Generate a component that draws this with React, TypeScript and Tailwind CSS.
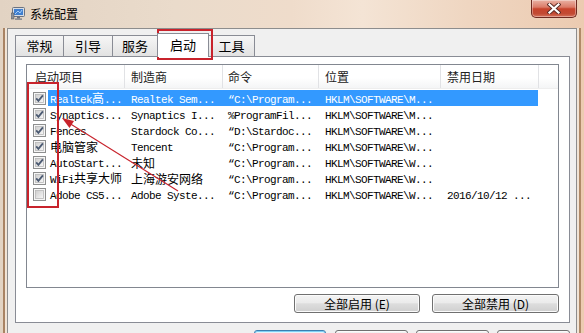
import React from 'react';

const CJK_SPLIT = /([\u3400-\u9fff\uff00-\uffef]+)/;
const CJK_TEST = /[\u3400-\u9fff\uff00-\uffef]/;

function Mixed({ text }: { text: string }) {
  const parts = text.split(CJK_SPLIT).filter((p) => p !== '');
  return (
    <>
      {parts.map((p, i) =>
        CJK_TEST.test(p) ? (
          <span key={i} className="font-['Noto_Sans_CJK_SC',sans-serif] text-[12px] tracking-normal">
            {p}
          </span>
        ) : (
          <span key={i} className="font-['Liberation_Mono',monospace] text-[11px] tracking-[-0.6px]">
            {p}
          </span>
        )
      )}
    </>
  );
}

function CheckBox({ on }: { on: boolean }) {
  return (
    <svg width="13" height="13" viewBox="0 0 13 13" className="block">
      <defs>
        <linearGradient id="cbg" x1="0" y1="0" x2="1" y2="1">
          <stop offset="0" stopColor="#cdcdcd" />
          <stop offset="1" stopColor="#f8f8f8" />
        </linearGradient>
      </defs>
      <rect x="0.5" y="0.5" width="12" height="12" fill="#f6f6f6" stroke="#8e8f8f" />
      <rect x="2.5" y="2.5" width="8" height="8" fill="url(#cbg)" stroke="#b9b9b9" strokeWidth="0.8" />
      {on && <path d="M3.2 6.4 L5.4 8.9 L9.9 3.4" fill="none" stroke="#4b5a72" strokeWidth="1.8" />}
    </svg>
  );
}

const rows = [
  { on: true, a: 'Realtek高...', b: 'Realtek Sem...', c: '“C:\\Program...', d: 'HKLM\\SOFTWARE\\M...', e: '' },
  { on: true, a: 'Synaptics...', b: 'Synaptics I...', c: '%ProgramFil...', d: 'HKLM\\SOFTWARE\\M...', e: '' },
  { on: true, a: 'Fences', b: 'Stardock Co...', c: '“D:\\Stardoc...', d: 'HKLM\\SOFTWARE\\M...', e: '' },
  { on: true, a: '电脑管家', b: 'Tencent', c: '“C:\\Program...', d: 'HKLM\\SOFTWARE\\W...', e: '' },
  { on: true, a: 'AutoStart...', b: '未知', c: '“C:\\Program...', d: 'HKLM\\SOFTWARE\\W...', e: '' },
  { on: true, a: 'WiFi共享大师', b: '上海游安网络', c: '“C:\\Program...', d: 'HKLM\\SOFTWARE\\W...', e: '' },
  { on: false, a: 'Adobe CS5...', b: 'Adobe Syste...', c: '“C:\\Program...', d: 'HKLM\\SOFTWARE\\W...', e: '2016/10/12 ...' },
];

const tabBase =
  "h-[21px] flex items-center justify-center border-t border-[#898c95] bg-[linear-gradient(#f6f6f6,#ececec_50%,#e2e2e2)] text-[13px] text-black";

export default function App() {
  return (
    <div className="relative w-[584px] h-[333px] overflow-hidden bg-[linear-gradient(90deg,#e2d3c3_0%,#eadbcb_30%,#efdccb_50%,#f4e4d5_62%,#efd6c1_80%,#eccbb1_100%)] font-['Noto_Sans_CJK_SC',sans-serif]">
      {/* Title bar */}
      <div className="h-[28px] flex items-start">
        <svg width="14" height="13" viewBox="0 0 14 13" className="mt-[7px] ml-[11px]">
          <rect x="1.5" y="0.5" width="12" height="9" rx="1" fill="#d9dde3" stroke="#6b7280" />
          <rect x="3" y="2" width="9" height="6" fill="#3f7fd0" />
          <path d="M4 7 L7 4 L9 6 L11 3" stroke="#bfe0ff" strokeWidth="0.8" fill="none" />
          <rect x="6" y="10" width="3" height="1.5" fill="#6b7280" />
          <rect x="4" y="11.5" width="7" height="1.2" fill="#6b7280" />
          <rect x="0" y="6" width="3" height="6" fill="#8a8f98" stroke="#555" strokeWidth="0.5" />
        </svg>
        <div className="ml-[5px] mt-[5px] text-[12px] leading-[17px] text-black">系统配置</div>
        <div className="ml-auto mr-[7px] w-[46px] h-[18px] rounded-b-[5px] border border-t-0 border-[#6e2a21] bg-[linear-gradient(#eab2a4,#db7b68_42%,#c7432c_52%,#c24a33_80%,#d5735c)] shadow-[inset_0_0_0_1px_rgba(255,255,255,0.35)] flex items-center justify-center">
          <svg width="14" height="11" viewBox="0 0 14 11">
            <path d="M2.5 1.5 L11.5 9.5 M11.5 1.5 L2.5 9.5" stroke="#5a2a24" strokeWidth="4" strokeLinecap="square" />
            <path d="M2.5 1.5 L11.5 9.5 M11.5 1.5 L2.5 9.5" stroke="#ffffff" strokeWidth="2.2" strokeLinecap="square" />
          </svg>
        </div>
      </div>

      {/* Client area */}
      <div className="mx-[7px] h-[305px] border-t border-l border-r border-[#8d8d8d] bg-[#f0f0f0] pl-[7px] pr-[6px] pt-[4px] shadow-[-2px_0_0_#f1e4d6,-4px_0_0_#a98363,2px_0_0_#f1e4d6,4px_0_0_#b08a68]">
        {/* Tabs */}
        <div className="h-[23px] flex items-end">
          <div className={`${tabBase} w-[48px] border-l`}>常规</div>
          <div className={`${tabBase} w-[49px] border-l`}>引导</div>
          <div className={`${tabBase} w-[45px] border-l`}>服务</div>
          <div className="relative z-10 w-[52px] h-[24px] -mb-[1px] flex items-center justify-center border-t border-l border-r border-[#898c95] bg-white text-[13px] text-black pb-[2px]">
            启动
          </div>
          <div className={`${tabBase} w-[46px] border-r`}>工具</div>
        </div>

        {/* Tab panel */}
        <div className="h-[267px] border border-[#898c95] bg-white pt-[7px] px-[10px] flex flex-col">
          {/* List */}
          <div className="h-[224px] border border-[#828790] bg-white overflow-hidden">
            <div className="h-[24px] flex bg-[linear-gradient(#ffffff,#ffffff_55%,#f4f5f6)] border-b border-[#eeeeee] text-[12px] text-[#222]">
              <div className="w-[97px] pl-[8px] flex items-center">启动项目</div>
              <div className="w-[98px] pl-[6px] flex items-center border-l border-[#e1e2e5]">制造商</div>
              <div className="w-[96px] pl-[5px] flex items-center border-l border-[#e1e2e5]">命令</div>
              <div className="w-[122px] pl-[6px] flex items-center border-l border-[#e1e2e5]">位置</div>
              <div className="w-[98px] pl-[6px] flex items-center border-l border-[#e1e2e5]">禁用日期</div>
              <div className="flex-1 border-l border-[#e1e2e5]" />
            </div>
            <div className="pt-[1px]">
              {rows.map((r, i) => {
                const sel = i === 0;
                return (
                  <div key={i} className="h-[16px] flex items-center">
                    <div className="w-[21px] pl-[6px] flex items-center">
                      <CheckBox on={r.on} />
                    </div>
                    <div
                      className={
                        sel
                          ? 'w-[490px] h-full flex items-center bg-[#3399ff] text-white'
                          : 'w-[490px] h-full flex items-center text-black'
                      }
                    >
                      <div className="w-[76px] pl-[2px] whitespace-nowrap overflow-hidden leading-[16px]">
                        <Mixed text={r.a} />
                      </div>
                      <div className="w-[98px] pl-[7px] whitespace-nowrap overflow-hidden leading-[16px]">
                        <Mixed text={r.b} />
                      </div>
                      <div className="w-[96px] pl-[6px] whitespace-nowrap overflow-hidden leading-[16px]">
                        <Mixed text={r.c} />
                      </div>
                      <div className="w-[122px] pl-[7px] whitespace-nowrap overflow-hidden leading-[16px]">
                        <Mixed text={r.d} />
                      </div>
                      <div className="w-[98px] pl-[7px] whitespace-nowrap overflow-hidden leading-[16px]">
                        <Mixed text={r.e} />
                      </div>
                    </div>
                  </div>
                );
              })}
            </div>
          </div>

          {/* Enable / disable buttons */}
          <div className="mt-[6px] flex justify-end gap-[12px]">
            <div className="w-[126px] h-[19px] rounded-[3px] border border-[#707070] bg-[linear-gradient(#f3f3f3,#ebebeb_45%,#dddddd_52%,#cfcfcf)] shadow-[inset_0_0_0_1px_#fbfbfb] flex items-center justify-center text-[12px] text-black">
              全部启用 (E)
            </div>
            <div className="w-[127px] h-[19px] rounded-[3px] border border-[#707070] bg-[linear-gradient(#f3f3f3,#ebebeb_45%,#dddddd_52%,#cfcfcf)] shadow-[inset_0_0_0_1px_#fbfbfb] flex items-center justify-center text-[12px] text-black">
              全部禁用 (D)
            </div>
          </div>
        </div>

        {/* Dialog buttons (cut off) */}
        <div className="mt-[7px] flex justify-end">
          <div className="w-[72px] h-[23px] rounded-[3px] border border-[#3c7fb1] bg-[linear-gradient(#e5f4fc,#d7ecf9_50%,#bfe2f7)] shadow-[inset_0_0_0_1px_#7fd0f5]" />
          <div className="ml-[9px] w-[73px] h-[23px] rounded-[3px] border border-[#707070] bg-[linear-gradient(#f3f3f3,#ebebeb_45%,#dddddd_52%,#cfcfcf)] shadow-[inset_0_0_0_1px_#fbfbfb]" />
          <div className="ml-[8px] w-[73px] h-[23px] rounded-[3px] border border-[#707070] bg-[linear-gradient(#f3f3f3,#ebebeb_45%,#dddddd_52%,#cfcfcf)] shadow-[inset_0_0_0_1px_#fbfbfb]" />
          <div className="ml-[8px] w-[73px] h-[23px] rounded-[3px] border border-[#707070] bg-[linear-gradient(#f3f3f3,#ebebeb_45%,#dddddd_52%,#cfcfcf)] shadow-[inset_0_0_0_1px_#fbfbfb]" />
        </div>
      </div>

      {/* Red annotations */}
      <svg
        className="absolute left-0 top-0 pointer-events-none"
        width="584"
        height="333"
        viewBox="0 0 584 333"
      >
        <rect x="158" y="30" width="54" height="29" fill="none" stroke="#c8232c" strokeWidth="2" />
        <rect x="28" y="83" width="30" height="124" fill="none" stroke="#c8232c" strokeWidth="2" />
        <line x1="178" y1="191" x2="69" y2="123" stroke="#c8232c" strokeWidth="1.1" />
        <polygon points="62,118 74,121 69.5,128" fill="#c8232c" />
      </svg>
    </div>
  );
}
